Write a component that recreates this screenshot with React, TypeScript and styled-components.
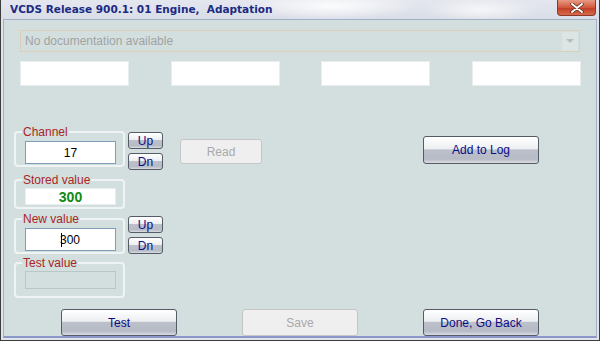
import React from 'react';
import styled, { createGlobalStyle } from 'styled-components';

const GlobalStyle = createGlobalStyle`
  html, body {
    margin: 0;
    padding: 0;
    background: #ffffff;
  }
  * {
    box-sizing: border-box;
  }
`;

const Window = styled.div`
  width: 600px;
  height: 341px;
  display: flex;
  flex-direction: column;
  background: #dfe3ea;
  border-left: 1px solid #3c3c3c;
  border-right: 1px solid #3c3c3c;
  border-bottom: 1px solid #3c3c3c;
  padding: 0 2px 2px 2px;
  font-family: 'Liberation Sans', Arial, sans-serif;
  font-size: 12px;
`;

const TitleBar = styled.div`
  flex-shrink: 0;
  height: 19px;
  display: flex;
  align-items: flex-start;
  justify-content: space-between;
  margin: 0 -2px;
  padding-left: 9px;
  background:
    radial-gradient(ellipse 90px 14px at 330px 6px, rgba(255, 255, 255, 0.9), rgba(255, 255, 255, 0)),
    radial-gradient(ellipse 60px 12px at 480px 10px, rgba(255, 255, 255, 0.7), rgba(255, 255, 255, 0)),
    linear-gradient(#e4e7ee, #d9dde6);
`;

const Title = styled.span`
  margin-top: 3px;
  font-family: 'DejaVu Sans', Verdana, sans-serif;
  font-weight: bold;
  font-size: 10.5px;
  color: #1b2a84;
  white-space: pre;
`;

const CloseButton = styled.div`
  width: 39px;
  height: 16px;
  margin-right: 3px;
  display: flex;
  align-items: center;
  justify-content: center;
  border: 1px solid #8a3a2a;
  border-top: none;
  border-radius: 0 0 4px 4px;
  background: linear-gradient(#e89a84, #d0583c 50%, #c0402a 55%, #d86a4a);
`;

const Body = styled.div`
  flex: 1;
  min-height: 0;
  display: flex;
  flex-direction: column;
  background: #d3dfdf;
  border: 1px solid #a3afc6;
  border-bottom: 2px solid #8c98c8;
  padding: 10px 14px 0 10px;
`;

const Combo = styled.div`
  width: 560px;
  height: 23px;
  margin-left: 6px;
  display: flex;
  align-items: center;
  justify-content: space-between;
  border: 1px solid #dccfb9;
  padding: 0 1px 0 4px;
  color: #a2a2a2;
`;

const ComboArrow = styled.div`
  width: 16px;
  height: 19px;
  display: flex;
  align-items: center;
  justify-content: center;
  background: #dde5e4;
`;

const BoxRow = styled.div`
  margin: 9px 0 0 6px;
  width: 561px;
  display: flex;
  justify-content: space-between;
`;

const BlankBox = styled.div`
  width: 109px;
  height: 25px;
  background: #ffffff;
  border: 1px solid #e8eeee;
`;

const Main = styled.div`
  display: flex;
  align-items: flex-start;
  margin: 39px 0 0 0;
`;

const LeftColumn = styled.div`
  display: flex;
  flex-direction: column;
`;

const GroupRow = styled.div<{ $gap: number }>`
  display: flex;
  align-items: flex-start;
  margin-top: ${(p) => p.$gap}px;
`;

const Group = styled.fieldset<{ $pt: number; $pb: number }>`
  width: 111px;
  margin: 0;
  padding: ${(p) => p.$pt}px 0 ${(p) => p.$pb}px 9px;
  border: 2px solid #eef4f4;
  border-radius: 4px;
`;

const Legend = styled.legend`
  padding: 0 1px;
  margin-left: -3px;
  line-height: 14px;
  color: #a82626;
`;

const TextBox = styled.div<{ $h: number }>`
  width: 91px;
  height: ${(p) => p.$h}px;
  display: flex;
  align-items: center;
  justify-content: center;
  background: #ffffff;
  border: 1px solid #7f9db9;
  color: #000000;
`;

const StoredBox = styled(TextBox)`
  border-color: #e6eeee;
  color: #128a12;
  font-weight: bold;
  font-size: 14px;
`;

const EmptyBox = styled(TextBox)`
  background: transparent;
  border-color: #b9c7c7;
`;

const Caret = styled.span`
  width: 1px;
  height: 14px;
  margin-right: -2px;
  background: #000000;
`;

const Spin = styled.div<{ $top: number }>`
  display: flex;
  flex-direction: column;
  gap: 4px;
  margin: ${(p) => p.$top}px 0 0 3px;
`;

const Button = styled.button<{ $w: number; $h: number }>`
  width: ${(p) => p.$w}px;
  height: ${(p) => p.$h}px;
  padding: 0;
  font-family: 'Liberation Sans', Arial, sans-serif;
  font-size: 12px;
  color: #0c0c86;
  border: 1px solid #545c66;
  border-radius: 3px;
  background: linear-gradient(#ffffff, #eceef1 45%, #bcc0ca 50%, #b7bbc6 85%, #dadce2);
  &:disabled {
    color: #a9a9a9;
    border-color: #c6c6c6;
    background: #efefef;
  }
`;

const ReadButton = styled(Button)`
  margin: 14px 0 0 17px;
`;

const LogButton = styled(Button)`
  margin: 11px 0 0 161px;
`;

const BottomRow = styled.div`
  display: flex;
  gap: 65px;
  margin: 11px 0 0 47px;
`;

export default function App() {
  return (
    <>
      <GlobalStyle />
      <Window>
        <TitleBar>
          <Title>{'VCDS Release 900.1: 01 Engine,  Adaptation'}</Title>
          <CloseButton>
            <svg width="14" height="10" viewBox="0 0 14 10">
              <path d="M2 1 L12 9 M12 1 L2 9" stroke="#5a2418" strokeWidth="3.4" strokeLinecap="round" />
              <path d="M2 1 L12 9 M12 1 L2 9" stroke="#ffffff" strokeWidth="2" strokeLinecap="round" />
            </svg>
          </CloseButton>
        </TitleBar>
        <Body>
          <Combo>
            <span>No documentation available</span>
            <ComboArrow>
              <svg width="8" height="4" viewBox="0 0 8 4">
                <path d="M0 0 L8 0 L4 4 Z" fill="#b4bcbc" />
              </svg>
            </ComboArrow>
          </Combo>
          <BoxRow>
            <BlankBox />
            <BlankBox />
            <BlankBox />
            <BlankBox />
          </BoxRow>
          <Main>
            <LeftColumn>
              <GroupRow $gap={0}>
                <Group $pt={2} $pb={1}>
                  <Legend>Channel</Legend>
                  <TextBox $h={23}>17</TextBox>
                </Group>
                <Spin $top={7}>
                  <Button $w={35} $h={17}>Up</Button>
                  <Button $w={35} $h={17}>Dn</Button>
                </Spin>
              </GroupRow>
              <GroupRow $gap={3}>
                <Group $pt={1} $pb={2}>
                  <Legend>Stored value</Legend>
                  <StoredBox $h={17}>300</StoredBox>
                </Group>
              </GroupRow>
              <GroupRow $gap={3}>
                <Group $pt={2} $pb={1}>
                  <Legend>New value</Legend>
                  <TextBox $h={23}>
                    <Caret />
                    300
                  </TextBox>
                </Group>
                <Spin $top={4}>
                  <Button $w={35} $h={17}>Up</Button>
                  <Button $w={35} $h={17}>Dn</Button>
                </Spin>
              </GroupRow>
              <GroupRow $gap={2}>
                <Group $pt={1} $pb={7}>
                  <Legend>Test value</Legend>
                  <EmptyBox $h={18} />
                </Group>
              </GroupRow>
            </LeftColumn>
            <ReadButton $w={82} $h={25} disabled>
              Read
            </ReadButton>
            <LogButton $w={116} $h={28}>Add to Log</LogButton>
          </Main>
          <BottomRow>
            <Button $w={116} $h={27}>Test</Button>
            <Button $w={116} $h={27} disabled>
              Save
            </Button>
            <Button $w={116} $h={27}>Done, Go Back</Button>
          </BottomRow>
        </Body>
      </Window>
    </>
  );
}
